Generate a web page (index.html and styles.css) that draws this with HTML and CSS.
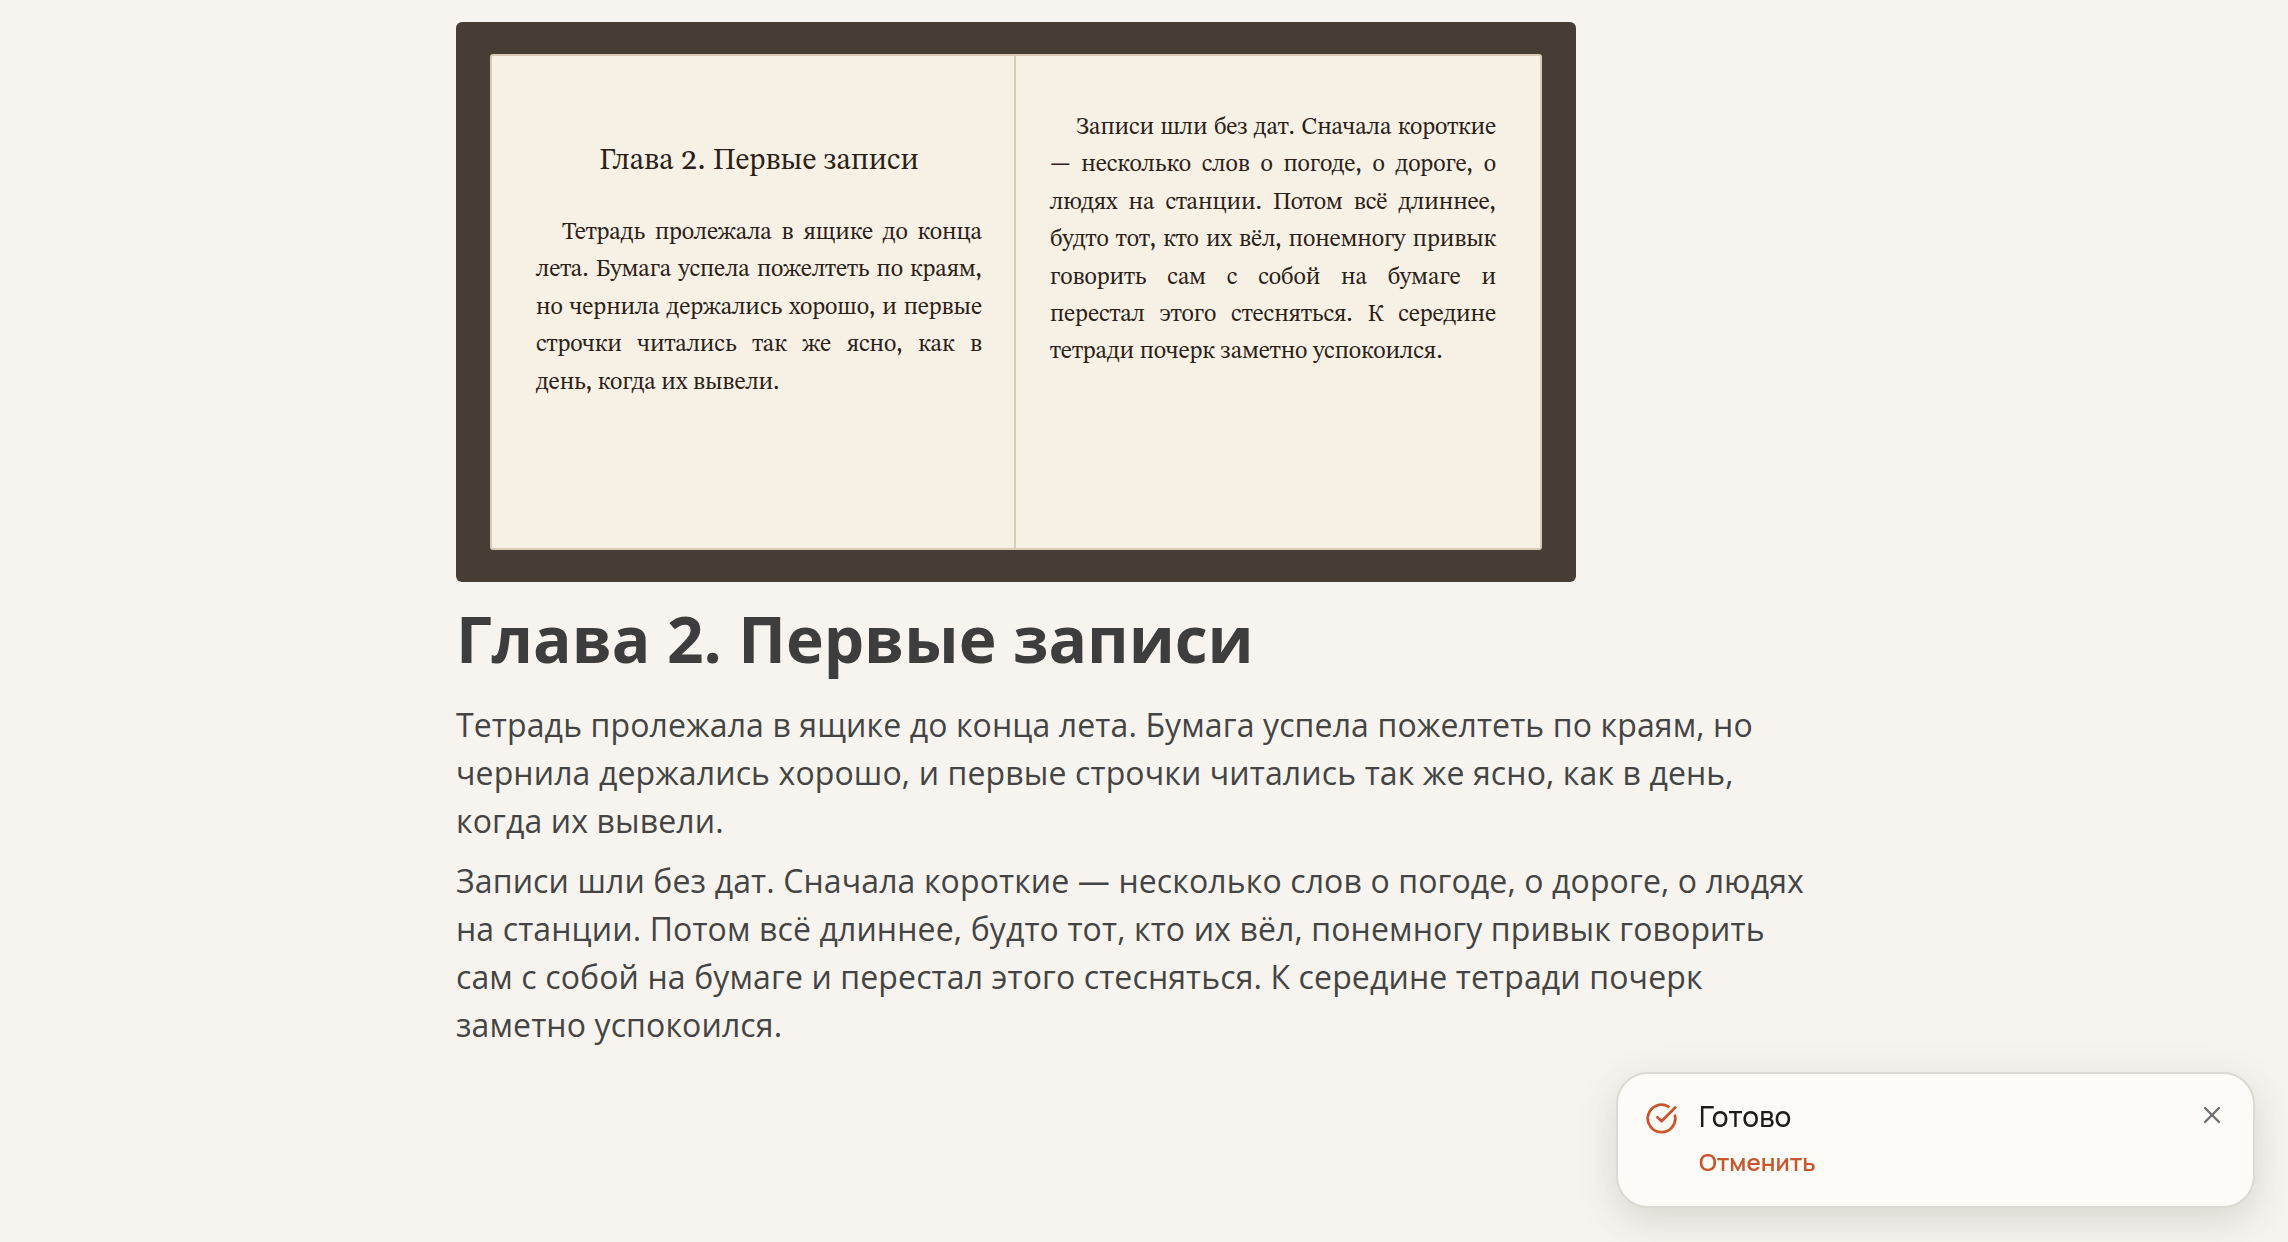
FILE: index.html
```html
<!DOCTYPE html>
<html lang="ru">
<head>
<meta charset="utf-8">
<title>Глава 2. Первые записи</title>
<link rel="stylesheet" href="styles.css">
</head>
<body>
<main class="reader">
  <div class="book">
    <section class="page page-left">
      <h2 class="page-title">Глава 2. Первые записи</h2>
      <p class="page-text">Тетрадь пролежала в ящике до конца лета. Бумага успела пожелтеть по краям, но чернила держались хорошо, и первые строчки читались так же ясно, как в день, когда их вывели.</p>
    </section>
    <section class="page page-right">
      <p class="page-text">Записи шли без дат. Сначала короткие — несколько слов о погоде, о дороге, о людях на станции. Потом всё длиннее, будто тот, кто их вёл, понемногу привык говорить сам с собой на бумаге и перестал этого стесняться. К середине тетради почерк заметно успокоился.</p>
    </section>
  </div>
  <h1 class="title">Глава 2. Первые записи</h1>
  <p class="body-text">Тетрадь пролежала в ящике до конца лета. Бумага успела пожелтеть по краям, но чернила держались хорошо, и первые строчки читались так же ясно, как в день, когда их вывели.</p>
  <p class="body-text">Записи шли без дат. Сначала короткие — несколько слов о погоде, о дороге, о людях на станции. Потом всё длиннее, будто тот, кто их вёл, понемногу привык говорить сам с собой на бумаге и перестал этого стесняться. К середине тетради почерк заметно успокоился.</p>
</main>
<aside class="toast">
  <svg class="toast-icon" viewBox="0 0 24 24" fill="none" stroke="currentColor" stroke-width="2" stroke-linecap="round" stroke-linejoin="round"><path d="M21.801 10A10 10 0 1 1 17 3.335"/><path d="m9 11 3 3L22 4"/></svg>
  <div class="toast-body">
    <div class="toast-title">Готово</div>
    <button class="toast-action" type="button">Отменить</button>
  </div>
  <svg class="toast-close" viewBox="0 0 24 24" fill="none" stroke="currentColor" stroke-width="2" stroke-linecap="round" stroke-linejoin="round"><path d="M18 6 6 18"/><path d="m6 6 12 12"/></svg>
</aside>
</body>
</html>
```
FILE: styles.css
```css
* { box-sizing: border-box; }
html, body { margin: 0; height: 100%; }
body {
  background: #f7f4ef;
  color: #444444;
  font-family: "Open Sans", sans-serif;
  overflow: hidden;
}
.reader { width: 1376px; margin: 0 auto; padding: 22px 16px 0 0; }
.book {
  display: flex;
  width: 1120px;
  height: 560px;
  padding: 32px 34px;
  background: #463d34;
  border-radius: 6px;
}
.page {
  width: 526px;
  background: #f7f0e4;
  border: 2px solid #d9ccb6;
  font-family: Gelasio, "STIX Two Text", "Liberation Serif", serif;
  color: #2a2118;
}
.page-left { padding: 0 32px 0 44px; border-radius: 3px 0 0 3px; }
.page-right { padding: 53px 44px 0 34px; border-left-width: 0; border-radius: 0 3px 3px 0; }
.page-title {
  margin: 85px 0 35px;
  font-size: 30px;
  line-height: 38px;
  font-weight: 400;
  text-align: center;
}
.page-text {
  margin: 0;
  font-size: 24px;
  line-height: 37.4px;
  letter-spacing: -0.1px;
  text-align: justify;
  text-indent: 26px;
}
.title {
  margin: 9px 0 14px;
  font-size: 64px;
  line-height: 1.5;
  font-weight: 700;
  letter-spacing: -0.06px;
  color: #3d3d3d;
}
.body-text {
  margin: 0 0 12px;
  font-size: 32px;
  line-height: 48px;
  letter-spacing: 0.12px;
}
.toast {
  position: fixed;
  right: 33px;
  bottom: 34px;
  display: flex;
  align-items: flex-start;
  gap: 21px;
  width: 639px;
  height: 136px;
  padding: 28px 27px;
  background: #fdfbf7;
  border: 2px solid #dcd9d4;
  border-radius: 32px;
  box-shadow: 0 12px 40px rgba(60, 50, 40, 0.16);
  font-family: Manrope, Inter, sans-serif;
}
.toast-icon { width: 33px; height: 33px; flex: none; color: #c8552b; }
.toast-body { flex: 1; }
.toast-title { font-size: 28px; line-height: 28px; font-weight: 500; color: #1c1c1c; }
.toast-action {
  margin-top: 16px;
  padding: 0;
  border: 0;
  background: none;
  font: 600 24px/32px Manrope, Inter, sans-serif;
  color: #c8552b;
}
.toast-close { width: 28px; height: 28px; flex: none; margin-top: -1px; color: #6f6f6f; }
```
